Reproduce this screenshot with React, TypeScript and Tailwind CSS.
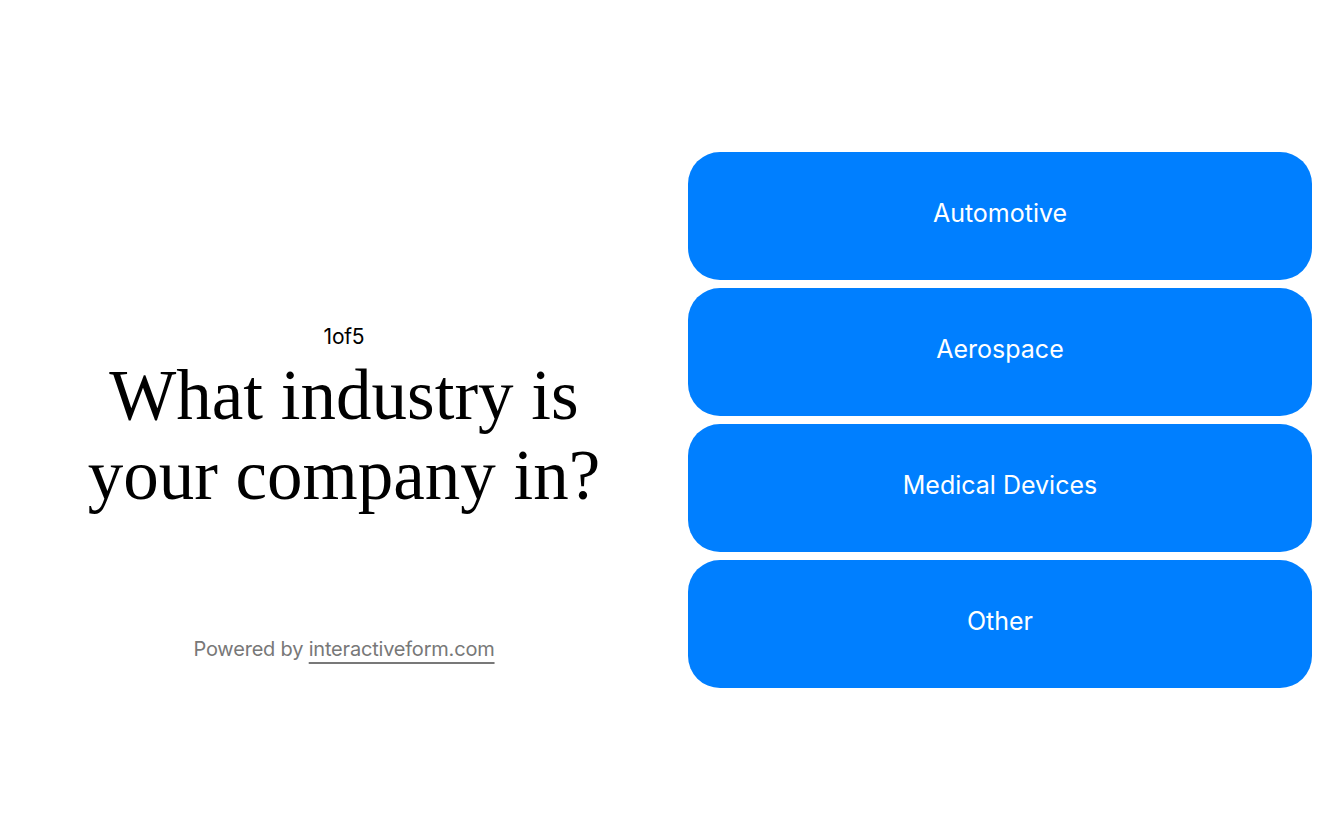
const options = ['Automotive', 'Aerospace', 'Medical Devices', 'Other'];

export default function App() {
  return (
    <div className="flex h-[840px] w-full items-center bg-white px-8 font-['Inter',sans-serif]">
      <div className="grid h-[536px] flex-1 grid-rows-[1fr_auto_1fr] pr-8">
        <div />
        <div className="flex flex-col items-center text-center">
          <p className="text-[21px] leading-6 tracking-[-0.01em] text-black">1of5</p>
          <h1 className="mt-[6px] font-['Liberation_Serif',serif] text-[71px] leading-[80px] text-black">
            What industry is
            <br />
            your company in?
          </h1>
        </div>
        <div className="flex items-end justify-center pb-[27px]">
          <p className="text-[20px] leading-6 tracking-[-0.01em] text-[#787878]">
            Powered by{' '}
            <a
              href="#"
              className="underline decoration-[#787878] decoration-2 underline-offset-[6px]"
            >
              interactiveform.com
            </a>
          </p>
        </div>
      </div>
      <div className="flex w-[624px] flex-col gap-2">
        {options.map((option) => (
          <button
            key={option}
            className="flex h-32 items-center justify-center rounded-[32px] bg-[#007fff] pb-[5px] text-[25px] text-white"
          >
            {option}
          </button>
        ))}
      </div>
    </div>
  );
}
